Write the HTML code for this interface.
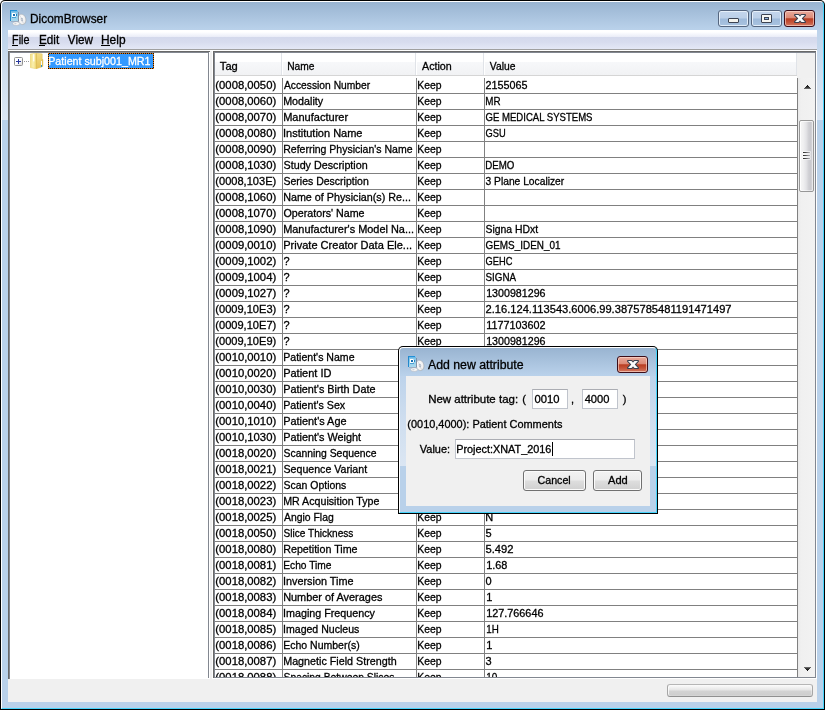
<!DOCTYPE html>
<html><head><meta charset="utf-8"><title>DicomBrowser</title>
<style>
*{box-sizing:border-box}
html,body{margin:0;padding:0}
body{-webkit-text-stroke-width:0.3px;width:825px;height:710px;overflow:hidden;position:relative;background:#fff;font-family:"Liberation Sans",sans-serif;font-size:11px;color:#000;line-height:16px}
div,span{white-space:pre}
.abs{position:absolute}
/* ---------- window frame ---------- */
.win{position:absolute;background:#000;border-radius:5px 5px 0 0}
.win .hi{position:absolute;left:1px;top:1px;right:1px;bottom:1px;border-radius:4px 4px 0 0;border:1px solid #fff;border-right-color:#46d4fc;border-bottom-color:#46d4fc;background:linear-gradient(#99b4d1 0px,#b9d1ea 27px,#b9d1ea 100%)}
.side{position:absolute;top:30px;width:6px;height:90px;background:linear-gradient(#bdd3eb 0,#cfdeef 50%,#dbe6f3 100%)}
.client{position:absolute;background:#f0f0f0}
.ttl{position:absolute;font-size:12px;line-height:16px;color:#000}
/* caption buttons */
.cb{position:absolute;width:31px;height:17px;border-radius:3px;border:1px solid #55667f;background:linear-gradient(#c4d6ec 0,#bcd0e8 48%,#9ebada 52%,#a9c3e0 100%);box-shadow:inset 0 0 0 1px rgba(236,244,253,.85)}
.cb.min,.cb.max{width:31px}
.cb.close{border-color:#3c0d18;background:linear-gradient(#e9aa9c 0,#dc8a77 45%,#b93d22 52%,#c4543a 75%,#d47a63 100%);box-shadow:inset 0 0 0 1px rgba(255,225,215,.6)}
/* ---------- menu ---------- */
.menubar{position:absolute;left:0;top:0;width:809px;height:19px;background:linear-gradient(#fff 0,#fff 2px,#f6f7fc 4px,#e9ecf7 7px,#d4d9ec 7px,#d7dcee 12px,#e4e8f6 19px)}
.mline1{position:absolute;left:0;top:19px;width:809px;height:1px;background:#a0a0a0}
.mline2{position:absolute;left:0;top:20px;width:809px;height:1px;background:#fff}
.mi{position:absolute;top:2px;font-size:12px;line-height:16px}
/* ---------- panels ---------- */
.panel{position:absolute;background:#fff}
.c{position:absolute;height:16px;line-height:16px;font-size:11px}
.hl{position:absolute;left:0;width:583px;height:1px;background:#808080}
.vl{position:absolute;top:25px;width:1px;height:599px;background:#808080}
.hdr{position:absolute;left:0;top:0;width:582px;height:23px;background:linear-gradient(#fff 0,#fff 9px,#f7f8fa 9px,#f1f2f4 22px);border-bottom:1px solid #d5d5d5}
.hs{position:absolute;top:0;width:2px;height:22px;background:linear-gradient(to right,#e0e3e8 0,#e0e3e8 1px,#fff 1px);opacity:1}
.ht{position:absolute;top:5px;height:16px;line-height:16px}
/* scrollbar */
.sb{position:absolute;left:583px;top:25px;width:17px;height:599px;background:linear-gradient(to right,#e9e9e9 0,#f0f0f0 3px,#f2f2f2 100%)}
.thumb{position:absolute;left:1px;top:42px;width:15px;height:72px;border:1px solid #979797;border-radius:2px;background:linear-gradient(to right,#f6f6f6 0,#f0f0f1 25%,#e3e3e6 48%,#d2d2d6 65%,#c9c9ce 82%,#dcdcdf 100%);box-shadow:inset 1px 0 0 rgba(255,255,255,.9),inset -1px 0 0 rgba(255,255,255,.45),inset 0 1px 0 rgba(255,255,255,.7),inset 0 -1px 0 rgba(255,255,255,.5)}
/* ---------- dialog widgets ---------- */
.tf{position:absolute;background:#fff;border:1px solid #c0c4cc;border-top-color:#abadb3}
.btn{position:absolute;height:21px;border:1px solid #707070;border-radius:3px;background:linear-gradient(#f3f3f3 0,#ececec 48%,#dedede 52%,#d0d0d0 100%);box-shadow:inset 0 0 0 1px #fbfbfb;text-align:center;line-height:19px}
.prog{position:absolute;border:1px solid #a6a6a6;border-top-color:#b6b6b6;border-bottom-color:#909090;border-radius:3px;background:linear-gradient(#fcfcfc 0,#f3f3f3 18%,#e6e6e6 45%,#d3d3d3 55%,#cecece 88%,#d8d8d8 100%);box-shadow:inset 1px 0 0 rgba(255,255,255,.75),inset -1px 0 0 rgba(255,255,255,.4)}

</style></head>
<body>
<div id="all" style="position:absolute;left:0;top:0;width:825px;height:710px;will-change:transform">
<!-- ======== main window ======== -->
<div class="win" style="left:0;top:0;width:825px;height:710px"><div class="hi"></div></div>
<div class="side" style="left:2px"></div><div class="side" style="left:817px"></div>
<svg class="abs" style="left:10px;top:10px" width="17" height="16" viewBox="0 0 17 16"><defs><linearGradient id="dg" x1="0" y1="0" x2="0" y2="1"><stop offset="0" stop-color="#7cc0e6"/><stop offset="1" stop-color="#a9d9ee"/></linearGradient><radialGradient id="cg" cx="0.4" cy="0.4" r="0.7"><stop offset="0" stop-color="#ffffff"/><stop offset="0.7" stop-color="#f0f0f0"/><stop offset="1" stop-color="#c4c4c4"/></radialGradient></defs><ellipse cx="6.2" cy="13.6" rx="3.5" ry="1.9" fill="#f6f6f6" stroke="#aeb4bc" stroke-width="0.5"/><ellipse cx="5.4" cy="13.7" rx="1.2" ry="0.6" fill="#c9ced6"/><ellipse cx="12" cy="9.4" rx="3.9" ry="5.3" fill="url(#cg)" stroke="#9aa0a8" stroke-width="0.5" stroke-opacity="0.8" transform="rotate(-15 12 9.4)"/><ellipse cx="11.9" cy="9.6" rx="1.2" ry="1.8" fill="#aab6c6" transform="rotate(-15 11.9 9.6)"/><ellipse cx="11.9" cy="9.6" rx="0.5" ry="0.8" fill="#f4f4f4" transform="rotate(-15 11.9 9.6)"/><path d="M10,5.5 L13.5,13.5" stroke="#b0b4bc" stroke-width="0.5" opacity="0.8"/><rect x="8" y="2" width="1" height="9" fill="#76859c" opacity="0.85"/><rect x="1" y="11" width="8" height="1" fill="#8c9ab0" opacity="0.55"/><rect x="0" y="0" width="8" height="11" fill="url(#dg)"/><rect x="0" y="0" width="7" height="1" fill="#2290d8"/><rect x="7" y="0" width="1" height="1" fill="#8fc4e8"/><rect x="0" y="0" width="1" height="11" fill="#2388cc"/><rect x="1" y="1" width="7" height="1" fill="#6db9e6"/><rect x="2" y="3" width="4" height="4" fill="#fff"/><rect x="3" y="4" width="2" height="2" fill="#176fb2"/><rect x="5" y="3" width="1" height="1" fill="#b9e0f4"/><rect x="5" y="6" width="1" height="1" fill="#b9e0f4"/><rect x="6" y="4" width="1" height="2" fill="#2583c4"/><rect x="2" y="7" width="4" height="1" fill="#4a9fd2"/></svg>
<div class="ttl" style="left:31px;top:11px"><span style="display:inline-block;transform-origin:0 0;transform:translateX(-0.99px) scaleX(0.9892);">DicomBrowser</span></div>
<div class="cb min" style="left:718px;top:10px"><div class="abs" style="left:9px;top:7px;width:11px;height:5px;background:#f4f4ee;border:1px solid #3c4352;border-radius:1px"></div></div>
<div class="cb max" style="left:751px;top:10px"><div class="abs" style="left:9px;top:3px;width:11px;height:9px;background:#f6f6f2;border:1px solid #3c4352;border-radius:1px"></div><div class="abs" style="left:12px;top:6px;width:5px;height:3px;background:#8fb2dc;border:1px solid #3c4352"></div></div>
<div class="cb close" style="left:784px;top:10px"><svg class="abs" style="left:8px;top:2px" width="14" height="11" viewBox="0 0 14 11"><g stroke="#39404f" stroke-width="2" stroke-linejoin="round" fill="#39404f"><path d="M2,2 L5.5,2 L12,9 L8.5,9 Z"/><path d="M8.5,2 L12,2 L5.5,9 L2,9 Z"/></g><g fill="#fbfbfb"><path d="M2,2 L5.5,2 L12,9 L8.5,9 Z"/><path d="M8.5,2 L12,2 L5.5,9 L2,9 Z"/></g></svg></div>

<div class="client" style="left:8px;top:30px;width:809px;height:672px">
  <div class="menubar"></div><div class="mline1"></div><div class="mline2"></div>
  <div class="mi" style="left:5px"><span style="display:inline-block;transform-origin:0 0;transform:translateX(-0.90px) scaleX(0.8972);">File</span></div>
  <div class="mi" style="left:32px"><span style="display:inline-block;transform-origin:0 0;transform:translateX(-0.97px) scaleX(0.9744);">Edit</span></div>
  <div class="mi" style="left:60px"><span style="display:inline-block;transform-origin:0 0;transform:translateX(-0.16px) scaleX(0.9740);">View</span></div>
  <div class="mi" style="left:94px"><span style="display:inline-block;transform-origin:0 0;transform:translateX(-0.99px) scaleX(0.9928);">Help</span></div>
  <div class="abs" style="left:4px;top:15px;width:6px;height:1px;background:#000"></div>
  <div class="abs" style="left:31px;top:15px;width:6px;height:1px;background:#000"></div>
  <div class="abs" style="left:93px;top:15px;width:9px;height:1px;background:#000"></div>

  <!-- tree panel: abs x 8..209, y 51..678 -->
  <div class="abs" style="left:0;top:21px;width:202px;height:628px;background:#fff"></div>
  <div class="abs" style="left:0;top:21px;width:202px;height:1px;background:#696969"></div>
  <div class="abs" style="left:0;top:21px;width:1px;height:628px;background:#696969"></div>
  <div class="abs" style="left:1px;top:22px;width:200px;height:1px;background:#828790"></div>
  <div class="abs" style="left:1px;top:22px;width:1px;height:627px;background:#828790"></div>
  <div class="abs" style="left:200px;top:22px;width:1px;height:626px;background:#828790"></div>
  <!-- divider abs 210..211 is client bg; 212 white -->
  <div class="abs" style="left:204px;top:21px;width:1px;height:628px;background:#fff"></div>

  <!-- tree content -->
  <div class="abs" style="left:6px;top:27px;width:9px;height:9px;border:1px solid #919191;border-radius:1.5px;background:linear-gradient(135deg,#fff 0,#fff 45%,#dcdcdc 100%)"></div><div class="abs" style="left:8px;top:31px;width:5px;height:1px;background:#28389c"></div><div class="abs" style="left:10px;top:29px;width:1px;height:5px;background:#28389c"></div><div class="abs" style="left:16px;top:31px;width:1px;height:1px;background:#9a9a9a"></div><div class="abs" style="left:18px;top:31px;width:1px;height:1px;background:#9a9a9a"></div><div class="abs" style="left:20px;top:31px;width:1px;height:1px;background:#9a9a9a"></div><svg class="abs" style="left:22px;top:23px" width="14" height="16" viewBox="0 0 14 16"><defs><linearGradient id="f1" x1="0" y1="0" x2="1" y2="0"><stop offset="0" stop-color="#f1dc80"/><stop offset="0.45" stop-color="#faf0b0"/><stop offset="1" stop-color="#f0d878"/></linearGradient><linearGradient id="f2" x1="0" y1="0" x2="0" y2="1"><stop offset="0" stop-color="#f3dc86"/><stop offset="1" stop-color="#e6c258"/></linearGradient></defs><path d="M0.3,1 L6.3,0.2 L6.3,15.8 L0.3,14.6 Z" fill="url(#f1)" stroke="#e6cc66" stroke-width="0.5"/><path d="M6.3,0.3 L12.2,0.9 L12.2,13.8 L6.3,15.7 Z" fill="url(#f2)" stroke="#dfbe55" stroke-width="0.5"/><path d="M12,6 L13.2,6.4 L13.2,13.2 L12,13.8 Z" fill="#e3c258"/><rect x="6.1" y="0.6" width="0.7" height="15" fill="#d9b84e" opacity="0.8"/><rect x="3.1" y="1.2" width="1.3" height="7.2" fill="#ffffff" opacity="0.92"/><rect x="11" y="8" width="1" height="4" fill="#fafafa"/><rect x="11" y="12" width="1" height="2" fill="#2592e2"/></svg>
  <div class="abs" style="left:40px;top:23px;width:106px;height:16px;background:#3399ff"></div>
  <div class="abs" style="left:40px;top:23px;width:106px;height:1px;background:repeating-linear-gradient(to right,#e8780a 0,#e8780a 1px,#111 1px,#111 2px)"></div>
  <div class="abs" style="left:40px;top:38px;width:106px;height:1px;background:repeating-linear-gradient(to right,#111 0,#111 1px,#e8780a 1px,#e8780a 2px)"></div>
  <div class="abs" style="left:40px;top:23px;width:1px;height:16px;background:repeating-linear-gradient(to bottom,#e8780a 0,#e8780a 1px,#111 1px,#111 2px)"></div>
  <div class="abs" style="left:145px;top:23px;width:1px;height:16px;background:repeating-linear-gradient(to bottom,#111 0,#111 1px,#e8780a 1px,#e8780a 2px)"></div>
  <div class="c" style="left:41px;top:23px;color:#fff"><span style="display:inline-block;transform-origin:0 0;transform:translateX(-0.81px) scaleX(0.9727);">Patient subj001_MR1</span></div>

  <!-- table panel: abs x 213..816, y 51..678 -->
  <div class="abs" style="left:205px;top:21px;width:604px;height:628px;background:#fff"></div>
  <div class="abs" style="left:205px;top:21px;width:603px;height:1px;background:#696969"></div>
  <div class="abs" style="left:205px;top:21px;width:1px;height:627px;background:#696969"></div>
  <div class="abs" style="left:206px;top:22px;width:602px;height:1px;background:#828790"></div>
  <div class="abs" style="left:206px;top:22px;width:1px;height:626px;background:#828790"></div>
  <div class="abs" style="left:807px;top:22px;width:1px;height:626px;background:#828790"></div>
  <div class="abs" style="left:206px;top:647px;width:602px;height:1px;background:#828790"></div>
  <!-- table content: abs origin (215,53) size 600x624 -->
  <div class="abs" style="left:207px;top:23px;width:600px;height:624px;overflow:hidden;background:#fff">
    <div class="abs" style="left:582px;top:0;width:18px;height:25px;background:#f0f0f0"></div>
    <div class="hdr"></div>
    <div class="hs" style="left:66px"></div><div class="hs" style="left:200px"></div><div class="hs" style="left:268px"></div><div class="hs" style="left:581px;width:1px"></div>
    <div class="ht" style="left:5px"><span style="display:inline-block;transform-origin:0 0;transform:translateX(-0.17px) scaleX(1.0099);">Tag</span></div>
    <div class="ht" style="left:73px"><span style="display:inline-block;transform-origin:0 0;transform:translateX(-0.77px) scaleX(0.9286);">Name</span></div>
    <div class="ht" style="left:207px"><span style="display:inline-block;transform-origin:0 0;transform:translateX(-0.00px) scaleX(0.9721);">Action</span></div>
    <div class="ht" style="left:275px"><span style="display:inline-block;transform-origin:0 0;transform:translateX(-0.16px) scaleX(0.9375);">Value</span></div>
<div class="hl" style="top:40px"></div>
<div class="hl" style="top:56px"></div>
<div class="hl" style="top:72px"></div>
<div class="hl" style="top:88px"></div>
<div class="hl" style="top:104px"></div>
<div class="hl" style="top:120px"></div>
<div class="hl" style="top:136px"></div>
<div class="hl" style="top:152px"></div>
<div class="hl" style="top:168px"></div>
<div class="hl" style="top:184px"></div>
<div class="hl" style="top:200px"></div>
<div class="hl" style="top:216px"></div>
<div class="hl" style="top:232px"></div>
<div class="hl" style="top:248px"></div>
<div class="hl" style="top:264px"></div>
<div class="hl" style="top:280px"></div>
<div class="hl" style="top:296px"></div>
<div class="hl" style="top:312px"></div>
<div class="hl" style="top:328px"></div>
<div class="hl" style="top:344px"></div>
<div class="hl" style="top:360px"></div>
<div class="hl" style="top:376px"></div>
<div class="hl" style="top:392px"></div>
<div class="hl" style="top:408px"></div>
<div class="hl" style="top:424px"></div>
<div class="hl" style="top:440px"></div>
<div class="hl" style="top:456px"></div>
<div class="hl" style="top:472px"></div>
<div class="hl" style="top:488px"></div>
<div class="hl" style="top:504px"></div>
<div class="hl" style="top:520px"></div>
<div class="hl" style="top:536px"></div>
<div class="hl" style="top:552px"></div>
<div class="hl" style="top:568px"></div>
<div class="hl" style="top:584px"></div>
<div class="hl" style="top:600px"></div>
<div class="hl" style="top:616px"></div>
    <div class="vl" style="left:67px"></div><div class="vl" style="left:201px"></div><div class="vl" style="left:269px"></div><div class="vl" style="left:582px"></div>
<div class="c" style="left:1px;top:24px"><span style="display:inline-block;transform-origin:0 0;transform:translateX(-0.68px) scaleX(1.0259);">(0008,0050)</span></div>
<div class="c" style="left:69px;top:24px"><span style="display:inline-block;transform-origin:0 0;transform:translateX(-0.00px) scaleX(0.9331);">Accession Number</span></div>
<div class="c" style="left:203px;top:24px"><span style="display:inline-block;transform-origin:0 0;transform:translateX(-0.79px) scaleX(0.9452);">Keep</span></div>
<div class="c" style="left:271px;top:24px"><span style="display:inline-block;transform-origin:0 0;transform:translateX(-0.49px) scaleX(0.9801);">2155065</span></div>
<div class="c" style="left:1px;top:40px"><span style="display:inline-block;transform-origin:0 0;transform:translateX(-0.68px) scaleX(1.0259);">(0008,0060)</span></div>
<div class="c" style="left:69px;top:40px"><span style="display:inline-block;transform-origin:0 0;transform:translateX(-0.81px) scaleX(0.9750);">Modality</span></div>
<div class="c" style="left:203px;top:40px"><span style="display:inline-block;transform-origin:0 0;transform:translateX(-0.79px) scaleX(0.9452);">Keep</span></div>
<div class="c" style="left:271px;top:40px"><span style="display:inline-block;transform-origin:0 0;transform:translateX(-0.74px) scaleX(0.8936);">MR</span></div>
<div class="c" style="left:1px;top:56px"><span style="display:inline-block;transform-origin:0 0;transform:translateX(-0.68px) scaleX(1.0259);">(0008,0070)</span></div>
<div class="c" style="left:69px;top:56px"><span style="display:inline-block;transform-origin:0 0;transform:translateX(-0.84px) scaleX(1.0026);">Manufacturer</span></div>
<div class="c" style="left:203px;top:56px"><span style="display:inline-block;transform-origin:0 0;transform:translateX(-0.79px) scaleX(0.9452);">Keep</span></div>
<div class="c" style="left:271px;top:56px"><span style="display:inline-block;transform-origin:0 0;transform:translateX(-0.43px) scaleX(0.8689);">GE MEDICAL SYSTEMS</span></div>
<div class="c" style="left:1px;top:72px"><span style="display:inline-block;transform-origin:0 0;transform:translateX(-0.68px) scaleX(1.0259);">(0008,0080)</span></div>
<div class="c" style="left:69px;top:72px"><span style="display:inline-block;transform-origin:0 0;transform:translateX(-1.00px) scaleX(1.0000);">Institution Name</span></div>
<div class="c" style="left:203px;top:72px"><span style="display:inline-block;transform-origin:0 0;transform:translateX(-0.79px) scaleX(0.9452);">Keep</span></div>
<div class="c" style="left:271px;top:72px"><span style="display:inline-block;transform-origin:0 0;transform:translateX(-0.42px) scaleX(0.8444);">GSU</span></div>
<div class="c" style="left:1px;top:88px"><span style="display:inline-block;transform-origin:0 0;transform:translateX(-0.68px) scaleX(1.0259);">(0008,0090)</span></div>
<div class="c" style="left:69px;top:88px"><span style="display:inline-block;transform-origin:0 0;transform:translateX(-0.80px) scaleX(0.9552);">Referring Physician&#x27;s Name</span></div>
<div class="c" style="left:203px;top:88px"><span style="display:inline-block;transform-origin:0 0;transform:translateX(-0.79px) scaleX(0.9452);">Keep</span></div>
<div class="c" style="left:1px;top:104px"><span style="display:inline-block;transform-origin:0 0;transform:translateX(-0.68px) scaleX(1.0259);">(0008,1030)</span></div>
<div class="c" style="left:69px;top:104px"><span style="display:inline-block;transform-origin:0 0;transform:translateX(-0.49px) scaleX(0.9765);">Study Description</span></div>
<div class="c" style="left:203px;top:104px"><span style="display:inline-block;transform-origin:0 0;transform:translateX(-0.79px) scaleX(0.9452);">Keep</span></div>
<div class="c" style="left:271px;top:104px"><span style="display:inline-block;transform-origin:0 0;transform:translateX(-0.74px) scaleX(0.8842);">DEMO</span></div>
<div class="c" style="left:1px;top:120px"><span style="display:inline-block;transform-origin:0 0;transform:translateX(-0.67px) scaleX(1.0056);">(0008,103E)</span></div>
<div class="c" style="left:69px;top:120px"><span style="display:inline-block;transform-origin:0 0;transform:translateX(-0.48px) scaleX(0.9545);">Series Description</span></div>
<div class="c" style="left:203px;top:120px"><span style="display:inline-block;transform-origin:0 0;transform:translateX(-0.79px) scaleX(0.9452);">Keep</span></div>
<div class="c" style="left:271px;top:120px"><span style="display:inline-block;transform-origin:0 0;transform:translateX(-0.47px) scaleX(0.9323);">3 Plane Localizer</span></div>
<div class="c" style="left:1px;top:136px"><span style="display:inline-block;transform-origin:0 0;transform:translateX(-0.68px) scaleX(1.0259);">(0008,1060)</span></div>
<div class="c" style="left:69px;top:136px"><span style="display:inline-block;transform-origin:0 0;transform:translateX(-0.81px) scaleX(0.9767);">Name of Physician(s) Re...</span></div>
<div class="c" style="left:203px;top:136px"><span style="display:inline-block;transform-origin:0 0;transform:translateX(-0.79px) scaleX(0.9452);">Keep</span></div>
<div class="c" style="left:1px;top:152px"><span style="display:inline-block;transform-origin:0 0;transform:translateX(-0.68px) scaleX(1.0259);">(0008,1070)</span></div>
<div class="c" style="left:69px;top:152px"><span style="display:inline-block;transform-origin:0 0;transform:translateX(-0.49px) scaleX(0.9717);">Operators&#x27; Name</span></div>
<div class="c" style="left:203px;top:152px"><span style="display:inline-block;transform-origin:0 0;transform:translateX(-0.79px) scaleX(0.9452);">Keep</span></div>
<div class="c" style="left:1px;top:168px"><span style="display:inline-block;transform-origin:0 0;transform:translateX(-0.68px) scaleX(1.0259);">(0008,1090)</span></div>
<div class="c" style="left:69px;top:168px"><span style="display:inline-block;transform-origin:0 0;transform:translateX(-0.83px) scaleX(0.9936);">Manufacturer&#x27;s Model Na...</span></div>
<div class="c" style="left:203px;top:168px"><span style="display:inline-block;transform-origin:0 0;transform:translateX(-0.79px) scaleX(0.9452);">Keep</span></div>
<div class="c" style="left:271px;top:168px"><span style="display:inline-block;transform-origin:0 0;transform:translateX(-0.47px) scaleX(0.9455);">Signa HDxt</span></div>
<div class="c" style="left:1px;top:184px"><span style="display:inline-block;transform-origin:0 0;transform:translateX(-0.68px) scaleX(1.0259);">(0009,0010)</span></div>
<div class="c" style="left:69px;top:184px"><span style="display:inline-block;transform-origin:0 0;transform:translateX(-0.84px) scaleX(1.0040);">Private Creator Data Ele...</span></div>
<div class="c" style="left:203px;top:184px"><span style="display:inline-block;transform-origin:0 0;transform:translateX(-0.79px) scaleX(0.9452);">Keep</span></div>
<div class="c" style="left:271px;top:184px"><span style="display:inline-block;transform-origin:0 0;transform:translateX(-0.45px) scaleX(0.9006);">GEMS_IDEN_01</span></div>
<div class="c" style="left:1px;top:200px"><span style="display:inline-block;transform-origin:0 0;transform:translateX(-0.68px) scaleX(1.0259);">(0009,1002)</span></div>
<div class="c" style="left:69px;top:200px"><span style="display:inline-block;transform-origin:0 0;transform:translateX(-0.50px) scaleX(1.0000);">?</span></div>
<div class="c" style="left:203px;top:200px"><span style="display:inline-block;transform-origin:0 0;transform:translateX(-0.79px) scaleX(0.9452);">Keep</span></div>
<div class="c" style="left:271px;top:200px"><span style="display:inline-block;transform-origin:0 0;transform:translateX(-0.42px) scaleX(0.8432);">GEHC</span></div>
<div class="c" style="left:1px;top:216px"><span style="display:inline-block;transform-origin:0 0;transform:translateX(-0.68px) scaleX(1.0259);">(0009,1004)</span></div>
<div class="c" style="left:69px;top:216px"><span style="display:inline-block;transform-origin:0 0;transform:translateX(-0.50px) scaleX(1.0000);">?</span></div>
<div class="c" style="left:203px;top:216px"><span style="display:inline-block;transform-origin:0 0;transform:translateX(-0.79px) scaleX(0.9452);">Keep</span></div>
<div class="c" style="left:271px;top:216px"><span style="display:inline-block;transform-origin:0 0;transform:translateX(-0.45px) scaleX(0.8911);">SIGNA</span></div>
<div class="c" style="left:1px;top:232px"><span style="display:inline-block;transform-origin:0 0;transform:translateX(-0.68px) scaleX(1.0259);">(0009,1027)</span></div>
<div class="c" style="left:69px;top:232px"><span style="display:inline-block;transform-origin:0 0;transform:translateX(-0.50px) scaleX(1.0000);">?</span></div>
<div class="c" style="left:203px;top:232px"><span style="display:inline-block;transform-origin:0 0;transform:translateX(-0.79px) scaleX(0.9452);">Keep</span></div>
<div class="c" style="left:272px;top:232px"><span style="display:inline-block;transform-origin:0 0;transform:translateX(-0.81px) scaleX(0.9694);">1300981296</span></div>
<div class="c" style="left:1px;top:248px"><span style="display:inline-block;transform-origin:0 0;transform:translateX(-0.67px) scaleX(1.0056);">(0009,10E3)</span></div>
<div class="c" style="left:69px;top:248px"><span style="display:inline-block;transform-origin:0 0;transform:translateX(-0.50px) scaleX(1.0000);">?</span></div>
<div class="c" style="left:203px;top:248px"><span style="display:inline-block;transform-origin:0 0;transform:translateX(-0.79px) scaleX(0.9452);">Keep</span></div>
<div class="c" style="left:271px;top:248px"><span style="display:inline-block;transform-origin:0 0;transform:translateX(-0.51px) scaleX(1.0124);">2.16.124.113543.6006.99.3875785481191471497</span></div>
<div class="c" style="left:1px;top:264px"><span style="display:inline-block;transform-origin:0 0;transform:translateX(-0.67px) scaleX(1.0056);">(0009,10E7)</span></div>
<div class="c" style="left:69px;top:264px"><span style="display:inline-block;transform-origin:0 0;transform:translateX(-0.50px) scaleX(1.0000);">?</span></div>
<div class="c" style="left:203px;top:264px"><span style="display:inline-block;transform-origin:0 0;transform:translateX(-0.79px) scaleX(0.9452);">Keep</span></div>
<div class="c" style="left:272px;top:264px"><span style="display:inline-block;transform-origin:0 0;transform:translateX(-0.82px) scaleX(0.9831);">1177103602</span></div>
<div class="c" style="left:1px;top:280px"><span style="display:inline-block;transform-origin:0 0;transform:translateX(-0.67px) scaleX(1.0056);">(0009,10E9)</span></div>
<div class="c" style="left:69px;top:280px"><span style="display:inline-block;transform-origin:0 0;transform:translateX(-0.50px) scaleX(1.0000);">?</span></div>
<div class="c" style="left:203px;top:280px"><span style="display:inline-block;transform-origin:0 0;transform:translateX(-0.79px) scaleX(0.9452);">Keep</span></div>
<div class="c" style="left:272px;top:280px"><span style="display:inline-block;transform-origin:0 0;transform:translateX(-0.81px) scaleX(0.9694);">1300981296</span></div>
<div class="c" style="left:1px;top:296px"><span style="display:inline-block;transform-origin:0 0;transform:translateX(-0.68px) scaleX(1.0259);">(0010,0010)</span></div>
<div class="c" style="left:69px;top:296px"><span style="display:inline-block;transform-origin:0 0;transform:translateX(-0.80px) scaleX(0.9611);">Patient&#x27;s Name</span></div>
<div class="c" style="left:203px;top:296px"><span style="display:inline-block;transform-origin:0 0;transform:translateX(-0.79px) scaleX(0.9452);">Keep</span></div>
<div class="c" style="left:1px;top:312px"><span style="display:inline-block;transform-origin:0 0;transform:translateX(-0.68px) scaleX(1.0259);">(0010,0020)</span></div>
<div class="c" style="left:69px;top:312px"><span style="display:inline-block;transform-origin:0 0;transform:translateX(-0.83px) scaleX(1.0000);">Patient ID</span></div>
<div class="c" style="left:203px;top:312px"><span style="display:inline-block;transform-origin:0 0;transform:translateX(-0.79px) scaleX(0.9452);">Keep</span></div>
<div class="c" style="left:1px;top:328px"><span style="display:inline-block;transform-origin:0 0;transform:translateX(-0.68px) scaleX(1.0259);">(0010,0030)</span></div>
<div class="c" style="left:69px;top:328px"><span style="display:inline-block;transform-origin:0 0;transform:translateX(-0.82px) scaleX(0.9838);">Patient&#x27;s Birth Date</span></div>
<div class="c" style="left:203px;top:328px"><span style="display:inline-block;transform-origin:0 0;transform:translateX(-0.79px) scaleX(0.9452);">Keep</span></div>
<div class="c" style="left:1px;top:344px"><span style="display:inline-block;transform-origin:0 0;transform:translateX(-0.68px) scaleX(1.0259);">(0010,0040)</span></div>
<div class="c" style="left:69px;top:344px"><span style="display:inline-block;transform-origin:0 0;transform:translateX(-0.81px) scaleX(0.9708);">Patient&#x27;s Sex</span></div>
<div class="c" style="left:203px;top:344px"><span style="display:inline-block;transform-origin:0 0;transform:translateX(-0.79px) scaleX(0.9452);">Keep</span></div>
<div class="c" style="left:1px;top:360px"><span style="display:inline-block;transform-origin:0 0;transform:translateX(-0.68px) scaleX(1.0259);">(0010,1010)</span></div>
<div class="c" style="left:69px;top:360px"><span style="display:inline-block;transform-origin:0 0;transform:translateX(-0.83px) scaleX(0.9920);">Patient&#x27;s Age</span></div>
<div class="c" style="left:203px;top:360px"><span style="display:inline-block;transform-origin:0 0;transform:translateX(-0.79px) scaleX(0.9452);">Keep</span></div>
<div class="c" style="left:1px;top:376px"><span style="display:inline-block;transform-origin:0 0;transform:translateX(-0.68px) scaleX(1.0259);">(0010,1030)</span></div>
<div class="c" style="left:69px;top:376px"><span style="display:inline-block;transform-origin:0 0;transform:translateX(-0.82px) scaleX(0.9872);">Patient&#x27;s Weight</span></div>
<div class="c" style="left:203px;top:376px"><span style="display:inline-block;transform-origin:0 0;transform:translateX(-0.79px) scaleX(0.9452);">Keep</span></div>
<div class="c" style="left:1px;top:392px"><span style="display:inline-block;transform-origin:0 0;transform:translateX(-0.68px) scaleX(1.0259);">(0018,0020)</span></div>
<div class="c" style="left:69px;top:392px"><span style="display:inline-block;transform-origin:0 0;transform:translateX(-0.47px) scaleX(0.9436);">Scanning Sequence</span></div>
<div class="c" style="left:203px;top:392px"><span style="display:inline-block;transform-origin:0 0;transform:translateX(-0.79px) scaleX(0.9452);">Keep</span></div>
<div class="c" style="left:1px;top:408px"><span style="display:inline-block;transform-origin:0 0;transform:translateX(-0.68px) scaleX(1.0259);">(0018,0021)</span></div>
<div class="c" style="left:69px;top:408px"><span style="display:inline-block;transform-origin:0 0;transform:translateX(-0.48px) scaleX(0.9651);">Sequence Variant</span></div>
<div class="c" style="left:203px;top:408px"><span style="display:inline-block;transform-origin:0 0;transform:translateX(-0.79px) scaleX(0.9452);">Keep</span></div>
<div class="c" style="left:1px;top:424px"><span style="display:inline-block;transform-origin:0 0;transform:translateX(-0.68px) scaleX(1.0259);">(0018,0022)</span></div>
<div class="c" style="left:69px;top:424px"><span style="display:inline-block;transform-origin:0 0;transform:translateX(-0.48px) scaleX(0.9514);">Scan Options</span></div>
<div class="c" style="left:203px;top:424px"><span style="display:inline-block;transform-origin:0 0;transform:translateX(-0.79px) scaleX(0.9452);">Keep</span></div>
<div class="c" style="left:1px;top:440px"><span style="display:inline-block;transform-origin:0 0;transform:translateX(-0.68px) scaleX(1.0259);">(0018,0023)</span></div>
<div class="c" style="left:69px;top:440px"><span style="display:inline-block;transform-origin:0 0;transform:translateX(-0.81px) scaleX(0.9677);">MR Acquisition Type</span></div>
<div class="c" style="left:203px;top:440px"><span style="display:inline-block;transform-origin:0 0;transform:translateX(-0.79px) scaleX(0.9452);">Keep</span></div>
<div class="c" style="left:1px;top:456px"><span style="display:inline-block;transform-origin:0 0;transform:translateX(-0.68px) scaleX(1.0259);">(0018,0025)</span></div>
<div class="c" style="left:69px;top:456px"><span style="display:inline-block;transform-origin:0 0;transform:translateX(-0.00px) scaleX(0.9453);">Angio Flag</span></div>
<div class="c" style="left:203px;top:456px"><span style="display:inline-block;transform-origin:0 0;transform:translateX(-0.79px) scaleX(0.9452);">Keep</span></div>
<div class="c" style="left:271px;top:456px"><span style="display:inline-block;transform-origin:0 0;transform:translateX(-0.83px) scaleX(1.0000);">N</span></div>
<div class="c" style="left:1px;top:472px"><span style="display:inline-block;transform-origin:0 0;transform:translateX(-0.68px) scaleX(1.0259);">(0018,0050)</span></div>
<div class="c" style="left:69px;top:472px"><span style="display:inline-block;transform-origin:0 0;transform:translateX(-0.46px) scaleX(0.9159);">Slice Thickness</span></div>
<div class="c" style="left:203px;top:472px"><span style="display:inline-block;transform-origin:0 0;transform:translateX(-0.79px) scaleX(0.9452);">Keep</span></div>
<div class="c" style="left:271px;top:472px"><span style="display:inline-block;transform-origin:0 0;transform:translateX(-0.50px) scaleX(1.0000);">5</span></div>
<div class="c" style="left:1px;top:488px"><span style="display:inline-block;transform-origin:0 0;transform:translateX(-0.68px) scaleX(1.0259);">(0018,0080)</span></div>
<div class="c" style="left:69px;top:488px"><span style="display:inline-block;transform-origin:0 0;transform:translateX(-0.81px) scaleX(0.9733);">Repetition Time</span></div>
<div class="c" style="left:203px;top:488px"><span style="display:inline-block;transform-origin:0 0;transform:translateX(-0.79px) scaleX(0.9452);">Keep</span></div>
<div class="c" style="left:271px;top:488px"><span style="display:inline-block;transform-origin:0 0;transform:translateX(-0.51px) scaleX(1.0189);">5.492</span></div>
<div class="c" style="left:1px;top:504px"><span style="display:inline-block;transform-origin:0 0;transform:translateX(-0.68px) scaleX(1.0259);">(0018,0081)</span></div>
<div class="c" style="left:69px;top:504px"><span style="display:inline-block;transform-origin:0 0;transform:translateX(-0.77px) scaleX(0.9276);">Echo Time</span></div>
<div class="c" style="left:203px;top:504px"><span style="display:inline-block;transform-origin:0 0;transform:translateX(-0.79px) scaleX(0.9452);">Keep</span></div>
<div class="c" style="left:272px;top:504px"><span style="display:inline-block;transform-origin:0 0;transform:translateX(-0.83px) scaleX(0.9917);">1.68</span></div>
<div class="c" style="left:1px;top:520px"><span style="display:inline-block;transform-origin:0 0;transform:translateX(-0.68px) scaleX(1.0259);">(0018,0082)</span></div>
<div class="c" style="left:69px;top:520px"><span style="display:inline-block;transform-origin:0 0;transform:translateX(-0.99px) scaleX(0.9857);">Inversion Time</span></div>
<div class="c" style="left:203px;top:520px"><span style="display:inline-block;transform-origin:0 0;transform:translateX(-0.79px) scaleX(0.9452);">Keep</span></div>
<div class="c" style="left:271px;top:520px"><span style="display:inline-block;transform-origin:0 0;transform:translateX(-0.50px) scaleX(1.0000);">0</span></div>
<div class="c" style="left:1px;top:536px"><span style="display:inline-block;transform-origin:0 0;transform:translateX(-0.68px) scaleX(1.0259);">(0018,0083)</span></div>
<div class="c" style="left:69px;top:536px"><span style="display:inline-block;transform-origin:0 0;transform:translateX(-0.83px) scaleX(0.9916);">Number of Averages</span></div>
<div class="c" style="left:203px;top:536px"><span style="display:inline-block;transform-origin:0 0;transform:translateX(-0.79px) scaleX(0.9452);">Keep</span></div>
<div class="c" style="left:272px;top:536px"><span style="display:inline-block;transform-origin:0 0;transform:translateX(-0.83px) scaleX(1.0000);">1</span></div>
<div class="c" style="left:1px;top:552px"><span style="display:inline-block;transform-origin:0 0;transform:translateX(-0.68px) scaleX(1.0259);">(0018,0084)</span></div>
<div class="c" style="left:69px;top:552px"><span style="display:inline-block;transform-origin:0 0;transform:translateX(-0.98px) scaleX(0.9767);">Imaging Frequency</span></div>
<div class="c" style="left:203px;top:552px"><span style="display:inline-block;transform-origin:0 0;transform:translateX(-0.79px) scaleX(0.9452);">Keep</span></div>
<div class="c" style="left:272px;top:552px"><span style="display:inline-block;transform-origin:0 0;transform:translateX(-0.82px) scaleX(0.9853);">127.766646</span></div>
<div class="c" style="left:1px;top:568px"><span style="display:inline-block;transform-origin:0 0;transform:translateX(-0.68px) scaleX(1.0259);">(0018,0085)</span></div>
<div class="c" style="left:69px;top:568px"><span style="display:inline-block;transform-origin:0 0;transform:translateX(-0.96px) scaleX(0.9595);">Imaged Nucleus</span></div>
<div class="c" style="left:203px;top:568px"><span style="display:inline-block;transform-origin:0 0;transform:translateX(-0.79px) scaleX(0.9452);">Keep</span></div>
<div class="c" style="left:272px;top:568px"><span style="display:inline-block;transform-origin:0 0;transform:translateX(-0.74px) scaleX(0.8919);">1H</span></div>
<div class="c" style="left:1px;top:584px"><span style="display:inline-block;transform-origin:0 0;transform:translateX(-0.68px) scaleX(1.0259);">(0018,0086)</span></div>
<div class="c" style="left:69px;top:584px"><span style="display:inline-block;transform-origin:0 0;transform:translateX(-0.80px) scaleX(0.9554);">Echo Number(s)</span></div>
<div class="c" style="left:203px;top:584px"><span style="display:inline-block;transform-origin:0 0;transform:translateX(-0.79px) scaleX(0.9452);">Keep</span></div>
<div class="c" style="left:272px;top:584px"><span style="display:inline-block;transform-origin:0 0;transform:translateX(-0.83px) scaleX(1.0000);">1</span></div>
<div class="c" style="left:1px;top:600px"><span style="display:inline-block;transform-origin:0 0;transform:translateX(-0.68px) scaleX(1.0259);">(0018,0087)</span></div>
<div class="c" style="left:69px;top:600px"><span style="display:inline-block;transform-origin:0 0;transform:translateX(-0.81px) scaleX(0.9767);">Magnetic Field Strength</span></div>
<div class="c" style="left:203px;top:600px"><span style="display:inline-block;transform-origin:0 0;transform:translateX(-0.79px) scaleX(0.9452);">Keep</span></div>
<div class="c" style="left:271px;top:600px"><span style="display:inline-block;transform-origin:0 0;transform:translateX(-0.50px) scaleX(1.0000);">3</span></div>
<div class="c" style="left:1px;top:616px"><span style="display:inline-block;transform-origin:0 0;transform:translateX(-0.68px) scaleX(1.0259);">(0018,0088)</span></div>
<div class="c" style="left:69px;top:616px"><span style="display:inline-block;transform-origin:0 0;transform:translateX(-0.47px) scaleX(0.9388);">Spacing Between Slices</span></div>
<div class="c" style="left:203px;top:616px"><span style="display:inline-block;transform-origin:0 0;transform:translateX(-0.79px) scaleX(0.9452);">Keep</span></div>
<div class="c" style="left:272px;top:616px"><span style="display:inline-block;transform-origin:0 0;transform:translateX(-0.76px) scaleX(0.9091);">10</span></div>
    <div class="sb">
      <div class="thumb"></div>
      <div class="abs" style="left:9px;top:7px;width:1px;height:1px;background:#111"></div><div class="abs" style="left:8px;top:8px;width:3px;height:1px;background:#222"></div><div class="abs" style="left:7px;top:9px;width:5px;height:1px;background:#3a3a3a"></div><div class="abs" style="left:6px;top:10px;width:7px;height:1px;background:#666"></div><div class="abs" style="left:6px;top:589px;width:7px;height:1px;background:#666"></div><div class="abs" style="left:7px;top:590px;width:5px;height:1px;background:#3a3a3a"></div><div class="abs" style="left:8px;top:591px;width:3px;height:1px;background:#222"></div><div class="abs" style="left:9px;top:592px;width:1px;height:1px;background:#111"></div><div class="abs" style="left:4px;top:73px;width:9px;height:3px;background:rgba(255,255,255,.55);border-radius:1px"></div><div class="abs" style="left:5px;top:74px;width:7px;height:1px;background:linear-gradient(to right,#2c2c2c 0,#4a4a4a 35%,#8e8e92 75%,#b4b4b8 100%)"></div><div class="abs" style="left:4px;top:76px;width:9px;height:3px;background:rgba(255,255,255,.55);border-radius:1px"></div><div class="abs" style="left:5px;top:77px;width:7px;height:1px;background:linear-gradient(to right,#2c2c2c 0,#4a4a4a 35%,#8e8e92 75%,#b4b4b8 100%)"></div><div class="abs" style="left:4px;top:79px;width:9px;height:3px;background:rgba(255,255,255,.55);border-radius:1px"></div><div class="abs" style="left:5px;top:80px;width:7px;height:1px;background:linear-gradient(to right,#2c2c2c 0,#4a4a4a 35%,#8e8e92 75%,#b4b4b8 100%)"></div>
    </div>
  </div>

  <!-- status bar -->
  <div class="prog" style="left:659px;top:654px;width:146px;height:13px"></div>
</div>

<!-- ======== dialog ======== -->
<div class="win" style="left:398px;top:346px;width:260px;height:168px"><div class="hi"></div></div>
<div class="side" style="left:400px;top:376px"></div><div class="side" style="left:650px;top:376px"></div>
<svg class="abs" style="left:408px;top:356px" width="17" height="16" viewBox="0 0 17 16"><defs><linearGradient id="dg" x1="0" y1="0" x2="0" y2="1"><stop offset="0" stop-color="#7cc0e6"/><stop offset="1" stop-color="#a9d9ee"/></linearGradient><radialGradient id="cg" cx="0.4" cy="0.4" r="0.7"><stop offset="0" stop-color="#ffffff"/><stop offset="0.7" stop-color="#f0f0f0"/><stop offset="1" stop-color="#c4c4c4"/></radialGradient></defs><ellipse cx="6.2" cy="13.6" rx="3.5" ry="1.9" fill="#f6f6f6" stroke="#aeb4bc" stroke-width="0.5"/><ellipse cx="5.4" cy="13.7" rx="1.2" ry="0.6" fill="#c9ced6"/><ellipse cx="12" cy="9.4" rx="3.9" ry="5.3" fill="url(#cg)" stroke="#9aa0a8" stroke-width="0.5" stroke-opacity="0.8" transform="rotate(-15 12 9.4)"/><ellipse cx="11.9" cy="9.6" rx="1.2" ry="1.8" fill="#aab6c6" transform="rotate(-15 11.9 9.6)"/><ellipse cx="11.9" cy="9.6" rx="0.5" ry="0.8" fill="#f4f4f4" transform="rotate(-15 11.9 9.6)"/><path d="M10,5.5 L13.5,13.5" stroke="#b0b4bc" stroke-width="0.5" opacity="0.8"/><rect x="8" y="2" width="1" height="9" fill="#76859c" opacity="0.85"/><rect x="1" y="11" width="8" height="1" fill="#8c9ab0" opacity="0.55"/><rect x="0" y="0" width="8" height="11" fill="url(#dg)"/><rect x="0" y="0" width="7" height="1" fill="#2290d8"/><rect x="7" y="0" width="1" height="1" fill="#8fc4e8"/><rect x="0" y="0" width="1" height="11" fill="#2388cc"/><rect x="1" y="1" width="7" height="1" fill="#6db9e6"/><rect x="2" y="3" width="4" height="4" fill="#fff"/><rect x="3" y="4" width="2" height="2" fill="#176fb2"/><rect x="5" y="3" width="1" height="1" fill="#b9e0f4"/><rect x="5" y="6" width="1" height="1" fill="#b9e0f4"/><rect x="6" y="4" width="1" height="2" fill="#2583c4"/><rect x="2" y="7" width="4" height="1" fill="#4a9fd2"/></svg>
<div class="ttl" style="left:428px;top:357px"><span style="display:inline-block;transform-origin:0 0;transform:translateX(-0.00px) scaleX(1.0233);">Add new attribute</span></div>
<div class="cb close" style="left:617px;top:356px"><svg class="abs" style="left:8px;top:2px" width="14" height="11" viewBox="0 0 14 11"><g stroke="#39404f" stroke-width="2" stroke-linejoin="round" fill="#39404f"><path d="M2,2 L5.5,2 L12,9 L8.5,9 Z"/><path d="M8.5,2 L12,2 L5.5,9 L2,9 Z"/></g><g fill="#fbfbfb"><path d="M2,2 L5.5,2 L12,9 L8.5,9 Z"/><path d="M8.5,2 L12,2 L5.5,9 L2,9 Z"/></g></svg></div>
<div class="client" style="left:406px;top:376px;width:244px;height:130px">
  <div class="c" style="left:23px;top:15px"><span style="display:inline-block;transform-origin:0 0;transform:translateX(-0.87px) scaleX(1.0435);">New attribute tag:</span></div>
  <div class="c" style="left:117px;top:15px"><span style="display:inline-block;transform-origin:0 0;transform:translateX(-0.67px) scaleX(1.0000);">(</span></div>
  <div class="tf" style="left:126px;top:13px;width:36px;height:20px"></div>
  <div class="c" style="left:129px;top:15px"><span style="display:inline-block;transform-origin:0 0;transform:translateX(-0.51px) scaleX(1.0213);">0010</span></div>
  <div class="c" style="left:166px;top:15px"><span style="display:inline-block;transform-origin:0 0;transform:translateX(-1.00px) scaleX(1.0000);">,</span></div>
  <div class="tf" style="left:176px;top:13px;width:36px;height:20px"></div>
  <div class="c" style="left:179px;top:15px"><span style="display:inline-block;transform-origin:0 0;transform:translateX(-0.34px) scaleX(1.0141);">4000</span></div>
  <div class="c" style="left:217px;top:15px"><span style="display:inline-block;transform-origin:0 0;transform:translateX(-0.17px) scaleX(1.0000);">)</span></div>
  <div class="c" style="left:2px;top:40px"><span style="display:inline-block;transform-origin:0 0;transform:translateX(-0.66px) scaleX(0.9946);">(0010,4000): Patient Comments</span></div>
  <div class="c" style="left:14px;top:65px"><span style="display:inline-block;transform-origin:0 0;transform:translateX(-0.17px) scaleX(0.9943);">Value:</span></div>
  <div class="tf" style="left:49px;top:63px;width:180px;height:20px"></div>
  <div class="c" style="left:51px;top:65px"><span style="display:inline-block;transform-origin:0 0;transform:translateX(-0.82px) scaleX(0.9877);">Project:XNAT_2016</span></div>
  <div class="abs" style="left:146px;top:66px;width:1px;height:14px;background:#000"></div>
  <div class="btn" style="left:117px;top:94px;width:63px"></div>
  <div class="btn" style="left:187px;top:94px;width:49px"></div>
  <div class="c" style="left:132px;top:96px"><span style="display:inline-block;transform-origin:0 0;transform:translateX(-0.48px) scaleX(0.9697);">Cancel</span></div>
  <div class="c" style="left:202px;top:96px"><span style="display:inline-block;transform-origin:0 0;transform:translateX(-0.00px) scaleX(1.0088);">Add</span></div>
</div>

</div>
</body></html>
